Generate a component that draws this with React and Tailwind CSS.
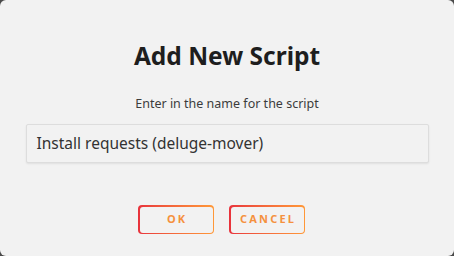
export default function App() {
  const Btn = ({ children, w }) => (
    <div className={`rounded-[4px] p-[1.5px] bg-gradient-to-r from-[#e8323c] to-[#ff9838] ${w}`}>
      <div className="h-[26px] rounded-[3px] bg-[#f2f2f2] flex items-center justify-center">
        <span className="text-[11px] font-bold tracking-[0.2em] text-[#f5913e] pl-[0.2em]">{children}</span>
      </div>
    </div>
  );
  return (
    <div className="w-[454px] h-[256px] bg-[#4a4a4a]" style={{ fontFamily: '"Noto Sans", "Open Sans", sans-serif' }}>
      <div className="w-full h-full bg-[#f2f2f2] rounded-[6px] flex flex-col items-center">
        <h1 className="mt-[39px] text-[24.5px] leading-[34px] font-bold text-[#1e1e1e]">Add New Script</h1>
        <p className="mt-[22px] text-[12.5px] leading-[18px] text-[#3c3c3c]">Enter in the name for the script</p>
        <div className="mt-[11px] w-[403px] h-[39px] border border-[#dddddd] rounded-[2px] bg-[#f2f2f2] shadow-[0_1px_2px_rgba(0,0,0,0.08)] flex items-center pl-[10px]">
          <span className="text-[15.5px] text-[#333333]">Install requests (deluge-mover)</span>
        </div>
        <div className="mt-[42px] mr-[11px] flex gap-[15px]">
          <Btn w="w-[76px]">OK</Btn>
          <Btn w="w-[76px]">CANCEL</Btn>
        </div>
      </div>
    </div>
  );
}
